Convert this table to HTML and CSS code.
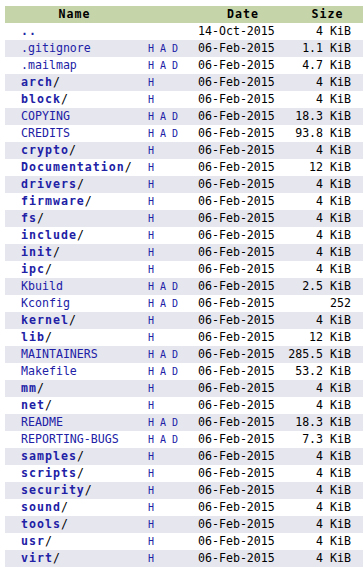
FILE: index.html
```html
<!DOCTYPE html>
<html>
<head>
<meta charset="utf-8">
<link rel="stylesheet" href="styles.css">
</head>
<body>
<table class="listing">
<colgroup><col class="c-name"><col class="c-attr"><col class="c-date"><col class="c-size"></colgroup>
<thead>
<tr><th class="h-name">Name</th><th></th><th class="h-date">Date</th><th class="h-size">Size</th></tr>
</thead>
<tbody>
<tr><td class="name"><a class="dir">..</a></td><td class="attr"></td><td class="date">14-Oct-2015</td><td class="size">4 KiB</td></tr>
<tr><td class="name"><a>.gitignore</a></td><td class="attr">H A D</td><td class="date">06-Feb-2015</td><td class="size">1.1 KiB</td></tr>
<tr><td class="name"><a>.mailmap</a></td><td class="attr">H A D</td><td class="date">06-Feb-2015</td><td class="size">4.7 KiB</td></tr>
<tr><td class="name"><a class="dir">arch</a>/</td><td class="attr">H</td><td class="date">06-Feb-2015</td><td class="size">4 KiB</td></tr>
<tr><td class="name"><a class="dir">block</a>/</td><td class="attr">H</td><td class="date">06-Feb-2015</td><td class="size">4 KiB</td></tr>
<tr><td class="name"><a>COPYING</a></td><td class="attr">H A D</td><td class="date">06-Feb-2015</td><td class="size">18.3 KiB</td></tr>
<tr><td class="name"><a>CREDITS</a></td><td class="attr">H A D</td><td class="date">06-Feb-2015</td><td class="size">93.8 KiB</td></tr>
<tr><td class="name"><a class="dir">crypto</a>/</td><td class="attr">H</td><td class="date">06-Feb-2015</td><td class="size">4 KiB</td></tr>
<tr><td class="name"><a class="dir">Documentation</a>/</td><td class="attr">H</td><td class="date">06-Feb-2015</td><td class="size">12 KiB</td></tr>
<tr><td class="name"><a class="dir">drivers</a>/</td><td class="attr">H</td><td class="date">06-Feb-2015</td><td class="size">4 KiB</td></tr>
<tr><td class="name"><a class="dir">firmware</a>/</td><td class="attr">H</td><td class="date">06-Feb-2015</td><td class="size">4 KiB</td></tr>
<tr><td class="name"><a class="dir">fs</a>/</td><td class="attr">H</td><td class="date">06-Feb-2015</td><td class="size">4 KiB</td></tr>
<tr><td class="name"><a class="dir">include</a>/</td><td class="attr">H</td><td class="date">06-Feb-2015</td><td class="size">4 KiB</td></tr>
<tr><td class="name"><a class="dir">init</a>/</td><td class="attr">H</td><td class="date">06-Feb-2015</td><td class="size">4 KiB</td></tr>
<tr><td class="name"><a class="dir">ipc</a>/</td><td class="attr">H</td><td class="date">06-Feb-2015</td><td class="size">4 KiB</td></tr>
<tr><td class="name"><a>Kbuild</a></td><td class="attr">H A D</td><td class="date">06-Feb-2015</td><td class="size">2.5 KiB</td></tr>
<tr><td class="name"><a>Kconfig</a></td><td class="attr">H A D</td><td class="date">06-Feb-2015</td><td class="size">252</td></tr>
<tr><td class="name"><a class="dir">kernel</a>/</td><td class="attr">H</td><td class="date">06-Feb-2015</td><td class="size">4 KiB</td></tr>
<tr><td class="name"><a class="dir">lib</a>/</td><td class="attr">H</td><td class="date">06-Feb-2015</td><td class="size">12 KiB</td></tr>
<tr><td class="name"><a>MAINTAINERS</a></td><td class="attr">H A D</td><td class="date">06-Feb-2015</td><td class="size">285.5 KiB</td></tr>
<tr><td class="name"><a>Makefile</a></td><td class="attr">H A D</td><td class="date">06-Feb-2015</td><td class="size">53.2 KiB</td></tr>
<tr><td class="name"><a class="dir">mm</a>/</td><td class="attr">H</td><td class="date">06-Feb-2015</td><td class="size">4 KiB</td></tr>
<tr><td class="name"><a class="dir">net</a>/</td><td class="attr">H</td><td class="date">06-Feb-2015</td><td class="size">4 KiB</td></tr>
<tr><td class="name"><a>README</a></td><td class="attr">H A D</td><td class="date">06-Feb-2015</td><td class="size">18.3 KiB</td></tr>
<tr><td class="name"><a>REPORTING-BUGS</a></td><td class="attr">H A D</td><td class="date">06-Feb-2015</td><td class="size">7.3 KiB</td></tr>
<tr><td class="name"><a class="dir">samples</a>/</td><td class="attr">H</td><td class="date">06-Feb-2015</td><td class="size">4 KiB</td></tr>
<tr><td class="name"><a class="dir">scripts</a>/</td><td class="attr">H</td><td class="date">06-Feb-2015</td><td class="size">4 KiB</td></tr>
<tr><td class="name"><a class="dir">security</a>/</td><td class="attr">H</td><td class="date">06-Feb-2015</td><td class="size">4 KiB</td></tr>
<tr><td class="name"><a class="dir">sound</a>/</td><td class="attr">H</td><td class="date">06-Feb-2015</td><td class="size">4 KiB</td></tr>
<tr><td class="name"><a class="dir">tools</a>/</td><td class="attr">H</td><td class="date">06-Feb-2015</td><td class="size">4 KiB</td></tr>
<tr><td class="name"><a class="dir">usr</a>/</td><td class="attr">H</td><td class="date">06-Feb-2015</td><td class="size">4 KiB</td></tr>
<tr><td class="name"><a class="dir">virt</a>/</td><td class="attr">H</td><td class="date">06-Feb-2015</td><td class="size">4 KiB</td></tr>
</tbody>
</table>
</body>
</html>
```

FILE: styles.css
```css
html, body {
  margin: 0;
  padding: 0;
  background: #ffffff;
}
body {
  padding: 6px 0 0 5px;
  font-family: "DejaVu Sans Mono", "Liberation Mono", monospace;
  font-size: 11.6px;
  color: #000000;
}
.listing {
  border-collapse: collapse;
  border-spacing: 0;
  table-layout: fixed;
  width: 358px;
}
.c-name { width: 139px; }
.c-attr { width: 50px; }
.c-date { width: 92px; }
.c-size { width: 77px; }
.listing th, .listing td {
  padding: 0;
  height: 17px;
  line-height: 17px;
  white-space: nowrap;
  overflow: hidden;
  vertical-align: middle;
}
.listing thead th {
  background: #c6d5a9;
  font-weight: bold;
  letter-spacing: 1px;
  text-align: center;
}
.listing thead th.h-date {
  padding-left: 6px;
}
.listing thead th.h-size {
  padding-left: 6px;
}
.listing tbody tr:nth-child(even) td {
  background: #e6e6ef;
}
.listing td.name {
  padding-left: 16px;
}
.name a {
  color: #2121a6;
  text-decoration: none;
}
.name a.dir {
  font-weight: bold;
  letter-spacing: 1px;
}
.listing td.attr {
  padding-left: 4px;
  color: #2121a6;
  font-size: 10px;
}
.listing td.date {
  padding-left: 4px;
}
.listing td.size {
  text-align: right;
  padding-right: 12px;
}
```
